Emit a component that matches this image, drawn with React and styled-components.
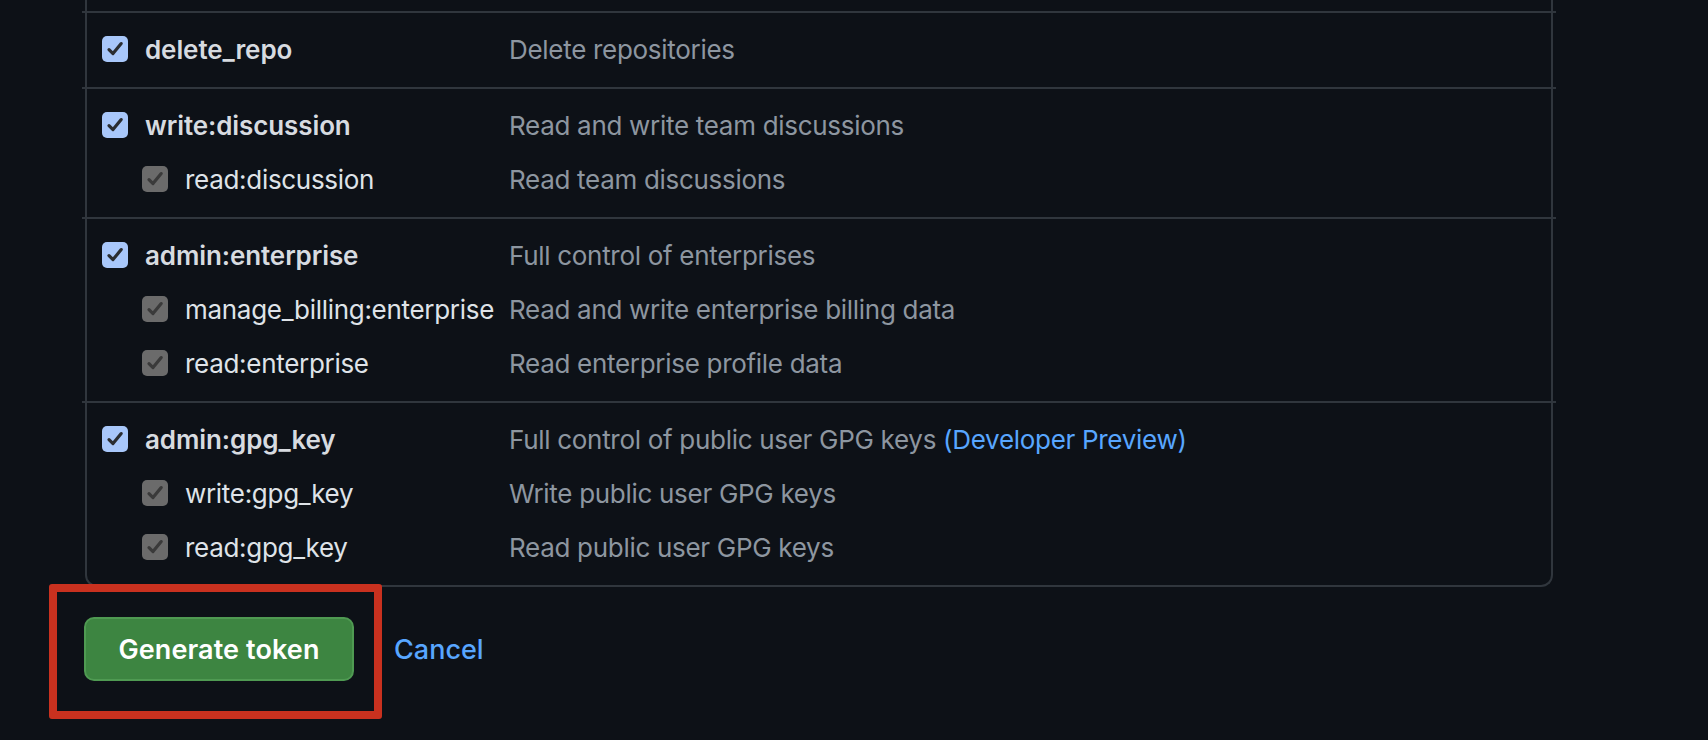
import React from 'react';
import styled, { createGlobalStyle } from 'styled-components';

const GlobalStyle = createGlobalStyle`
  html, body {
    margin: 0;
    padding: 0;
    background: #0d1117;
  }
  body {
    font-family: Inter, "Noto Sans", "Liberation Sans", sans-serif;
    -webkit-font-smoothing: antialiased;
  }
`;

const Page = styled.div`
  min-height: 100vh;
  padding: 0 0 0 85px;
  box-sizing: border-box;
  background: #0d1117;
`;

const ScopeBox = styled.div`
  width: 1468px;
  box-sizing: border-box;
  padding-top: 11px;
  border: 2px solid #30363d;
  border-top: none;
  border-radius: 0 0 12px 12px;
`;

const Group = styled.div`
  margin: 0 -5px;
  padding: 9px 0 11px 20px;
  border-top: 2px solid #30363d;
`;

const Item = styled.div`
  display: grid;
  grid-template-columns: 407px 1fr;
  align-items: center;
  height: 54px;
`;

const LabelCell = styled.label`
  display: flex;
  align-items: center;
  gap: 17px;
  padding-left: ${p => (p.child ? '40px' : '0')};
  font-size: 26px;
  font-weight: ${p => (p.child ? 400 : 600)};
  letter-spacing: ${p => (p.child ? '-0.3px' : '-0.1px')};
  color: ${p => (p.child ? '#dfe3e8' : '#d7dbe0')};
  white-space: nowrap;
`;

const Box = styled.span`
  display: inline-flex;
  align-items: center;
  justify-content: center;
  flex: none;
  width: 26px;
  height: 26px;
  border-radius: 5px;
  background: ${p => (p.child ? '#6b6b6b' : '#a8c7fa')};
`;

const Desc = styled.span`
  font-size: 26px;
  letter-spacing: -0.3px;
  color: #8d96a0;
  white-space: nowrap;
`;

const PreviewLink = styled.a`
  color: #58a6ff;
  text-decoration: none;
`;

const Footer = styled.div`
  display: flex;
  align-items: center;
  gap: 40px;
  margin-top: 30px;
  margin-left: -1px;
`;

const Highlight = styled.div`
  position: relative;
`;

const RedFrame = styled.div`
  position: absolute;
  inset: -33px -28px -38px -35px;
  border: 8px solid #c9311f;
  border-radius: 3px;
  pointer-events: none;
`;

const PrimaryButton = styled.button`
  width: 270px;
  height: 64px;
  border: 2px solid #4f9a52;
  border-radius: 10px;
  background: #3d8541;
  color: #ffffff;
  font-family: inherit;
  font-size: 27px;
  font-weight: 600;
  letter-spacing: 0.1px;
  cursor: pointer;
`;

const CancelLink = styled.a`
  color: #58a6ff;
  font-size: 27px;
  font-weight: 500;
  text-decoration: none;
`;

const Check = ({ child }) => (
  <Box child={child}>
    <svg width="20" height="20" viewBox="0 0 20 20">
      <path
        d="M4 10.6 L8 14.6 L16.2 4.6"
        fill="none"
        stroke={child ? '#3a3a3a' : '#2a2d31'}
        strokeWidth="3.2"
        strokeLinecap="round"
        strokeLinejoin="round"
      />
    </svg>
  </Box>
);

const groups = [
  { name: 'delete_repo', desc: 'Delete repositories', children: [] },
  {
    name: 'write:discussion',
    desc: 'Read and write team discussions',
    children: [{ name: 'read:discussion', desc: 'Read team discussions' }],
  },
  {
    name: 'admin:enterprise',
    desc: 'Full control of enterprises',
    children: [
      { name: 'manage_billing:enterprise', desc: 'Read and write enterprise billing data' },
      { name: 'read:enterprise', desc: 'Read enterprise profile data' },
    ],
  },
  {
    name: 'admin:gpg_key',
    desc: 'Full control of public user GPG keys',
    preview: true,
    children: [
      { name: 'write:gpg_key', desc: 'Write public user GPG keys' },
      { name: 'read:gpg_key', desc: 'Read public user GPG keys' },
    ],
  },
];

const ScopeRow = ({ scope, child }) => (
  <Item>
    <LabelCell child={child}>
      <Check child={child} />
      {scope.name}
    </LabelCell>
    <Desc>
      {scope.desc}
      {scope.preview && (
        <>
          {' '}
          <PreviewLink href="#">(Developer Preview)</PreviewLink>
        </>
      )}
    </Desc>
  </Item>
);

export default function App() {
  return (
    <Page>
      <GlobalStyle />
      <ScopeBox>
        {groups.map(g => (
          <Group key={g.name}>
            <ScopeRow scope={g} />
            {g.children.map(c => (
              <ScopeRow key={c.name} scope={c} child />
            ))}
          </Group>
        ))}
      </ScopeBox>
      <Footer>
        <Highlight>
          <PrimaryButton>Generate token</PrimaryButton>
          <RedFrame />
        </Highlight>
        <CancelLink href="#">Cancel</CancelLink>
      </Footer>
    </Page>
  );
}
